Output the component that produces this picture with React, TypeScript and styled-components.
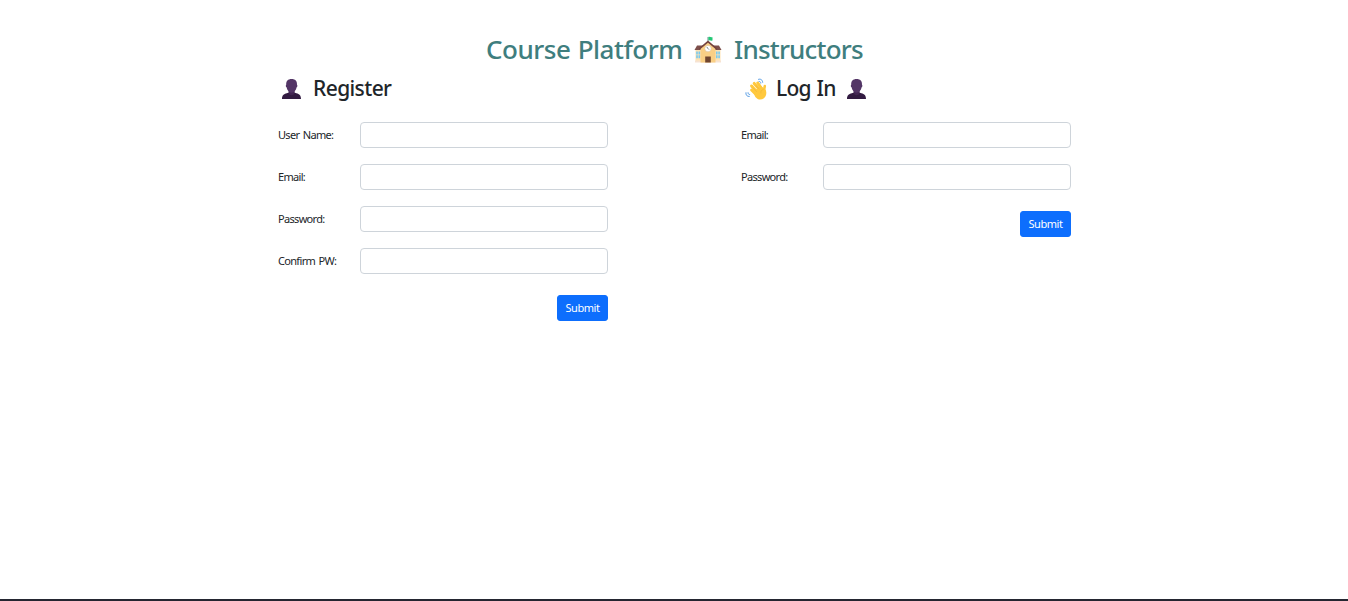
import React from 'react';
import styled, { createGlobalStyle } from 'styled-components';

const GlobalStyle = createGlobalStyle`
  *, *::before, *::after { box-sizing: border-box; }
  body {
    margin: 0;
    background: #fff;
    color: #212529;
    font-family: "Segoe UI", "Noto Sans", "Open Sans", sans-serif;
  }
`;

const Page = styled.main`
  display: flex;
  flex-direction: column;
  height: 601px;
  padding-top: 33px;
  border-bottom: 2px solid #242631;
  overflow: hidden;
`;

const Title = styled.h1`
  display: flex;
  align-items: center;
  height: 34px;
  margin: 0 0 0 486px;
  color: #3f7e7e;
  font-size: 26px;
  font-weight: 500;
  line-height: 34px;
  white-space: nowrap;
`;

const Text = styled.span<{ $width: number; $spacing?: number }>`
  flex: none;
  width: ${(p) => p.$width}px;
  padding-bottom: 2px;
  letter-spacing: ${(p) => p.$spacing ?? 0}px;
  word-spacing: 1px;
  white-space: nowrap;
`;

const Columns = styled.div`
  display: grid;
  grid-template-columns: 330px 330px;
  column-gap: 133px;
  align-items: start;
  margin: 7px 0 0 278px;
`;

const Form = styled.form`
  display: flex;
  flex-direction: column;
`;

const Heading = styled.h2`
  display: flex;
  align-items: center;
  height: 30px;
  margin: 0 0 18px;
  padding-left: 3px;
  font-size: 21px;
  font-weight: 500;
  line-height: 30px;
`;

const Field = styled.label`
  display: grid;
  grid-template-columns: 82px 248px;
  align-items: center;
  height: 26px;
  margin-bottom: 16px;
  font-size: 11px;
`;

const Label = styled.span`
  padding-bottom: 2px;
  letter-spacing: -0.68px;
  word-spacing: 1.2px;
`;

const Input = styled.input`
  width: 100%;
  height: 26px;
  padding: 3px 8px;
  border: 1px solid #ced4da;
  border-radius: 4px;
  background: #fff;
  font: inherit;
  outline: none;
`;

const Submit = styled.button`
  align-self: flex-end;
  width: 51px;
  height: 26px;
  margin-top: 5px;
  padding: 0;
  border: 1px solid #0d6efd;
  border-radius: 3px;
  background: #0d6efd;
  color: #fff;
  font-family: inherit;
  font-size: 11px;
  letter-spacing: -0.45px;
  line-height: 24px;
`;

const Icon = styled.svg<{ $left?: number; $right?: number }>`
  flex: none;
  margin-left: ${(p) => p.$left ?? 0}px;
  margin-right: ${(p) => p.$right ?? 0}px;
`;

const School = () => (
  <Icon width="28" height="28" viewBox="0 0 28 28" $left={11} $right={12}>
    <path d="M1.5 13h25v13h-25z" fill="#ffe3b3" />
    <path d="M1 24.5h26v2H1z" fill="#f6e3d3" />
    <path d="M3 9.5h22l2.5 4.5H.5z" fill="#7d4f4b" />
    <path d="M14 6 21.5 12.5v14h-15v-14z" fill="#f9cf85" />
    <path d="M14 4.4 22.8 12v2L14 6.8 5.2 14v-2z" fill="#75433e" />
    <path d="M14 5V1" stroke="#6e8790" strokeWidth="1" />
    <path d="M14.4 1c1.6-.7 2.5.8 4.1.2v3.3c-1.6.6-2.6-.7-4.1-.1z" fill="#23c875" />
    <circle cx="14" cy="12.6" r="3.2" fill="#fff" stroke="#d7ba96" strokeWidth=".5" />
    <path d="m12.8 10.9 1.2 1.7 1 1" fill="none" stroke="#59636a" strokeWidth=".8" />
    <path d="M11.2 20.5h5.6v6h-5.6z" fill="#70452f" />
    <path d="M2.2 15.5h1.6v3H2.2zm2.3 0h1.6v3H4.5zM2.2 19.3h1.6v3H2.2zm2.3 0h1.6v3H4.5zM22 15.5h1.6v3H22zm2.3 0h1.6v3h-1.6zM22 19.3h1.6v3H22zm2.3 0h1.6v3h-1.6z" fill="#78caf0" />
  </Icon>
);

const Person = ({ left = 0, right = 0 }: { left?: number; right?: number }) => (
  <Icon width="21" height="22" viewBox="0 0 21 22" $left={left} $right={right}>
    <path d="M1 21c0-3.6 1.7-5 4.8-5.7l2.3-.7h5l2.3.7c3 .7 4.6 2.1 4.6 5.7z" fill="#321b41" />
    <path d="M7.6 12h6v3.2c-1.2 2.6-4.8 2.6-6 0z" fill="#432653" />
    <path d="M10.6 1C6.9 1 5 3.1 5.2 6.8c-.7.5-.4 2.5.5 2.8.4 2.8 2.5 5.1 4.9 5.1s4.5-2.3 4.9-5.1c.9-.3 1.2-2.3.5-2.8C16.2 3.1 14.3 1 10.6 1z" fill="#533566" />
  </Icon>
);

const Wave = () => (
  <Icon width="23" height="23" viewBox="0 0 23 23" $left={1} $right={8}>
    <g fill="none" stroke="#ffc83d" strokeLinecap="round">
      <path d="m6.6 12 5 5" strokeWidth="3" />
      <path d="m6.6 8 7 8" strokeWidth="3" />
      <path d="m9.2 5.4 7 8" strokeWidth="3" />
      <path d="m12.8 5 5.2 7.6" strokeWidth="3" />
      <path d="M19.7 14c-.7-2.4-.7-3.8.1-6" strokeWidth="2.6" />
    </g>
    <path d="m8.1 13.5 8-5.5 4.9 4.7c.7 3 .2 5.3-1.6 7.1-3.1 2.8-6.5 2.2-9.1-.8z" fill="#ffc83d" />
    <path d="m8.2 9.8 3.4 3.8m-.8-6.4 3.4 3.9m1.7 3.9c-.4-1.7.4-3 2.2-3.4" fill="none" stroke="#eeb136" strokeWidth=".6" strokeLinecap="round" />
    <path d="M13.5 1.3c2.2-.8 4.2.8 4.2 3m-3.7-.9c1.1-.1 1.8.6 1.8 1.7M.9 14.7c-.5 2.2 1.2 4 3.4 3.8M3 14.7c-.1 1.1.6 1.8 1.7 1.8" fill="none" stroke="#5b9fe5" strokeWidth="1" strokeLinecap="round" />
  </Icon>
);

const TextField = ({ label, type = 'text' }: { label: string; type?: string }) => (
  <Field>
    <Label>{label}</Label>
    <Input type={type} />
  </Field>
);

export default function App() {
  return (
    <>
      <GlobalStyle />
      <Page>
        <Title>
          <Text $width={197} $spacing={-0.48}>Course Platform</Text>
          <School />
          <Text $width={130} $spacing={-0.8}>Instructors</Text>
        </Title>
        <Columns>
          <Form>
            <Heading>
              <Person right={11} />
              <Text $width={80} $spacing={-0.6}>Register</Text>
            </Heading>
            <TextField label="User Name:" />
            <TextField label="Email:" type="email" />
            <TextField label="Password:" type="password" />
            <TextField label="Confirm PW:" type="password" />
            <Submit type="button">Submit</Submit>
          </Form>
          <Form>
            <Heading>
              <Wave />
              <Text $width={62} $spacing={-0.75}>Log In</Text>
              <Person left={8} />
            </Heading>
            <TextField label="Email:" type="email" />
            <TextField label="Password:" type="password" />
            <Submit type="button">Submit</Submit>
          </Form>
        </Columns>
      </Page>
    </>
  );
}
